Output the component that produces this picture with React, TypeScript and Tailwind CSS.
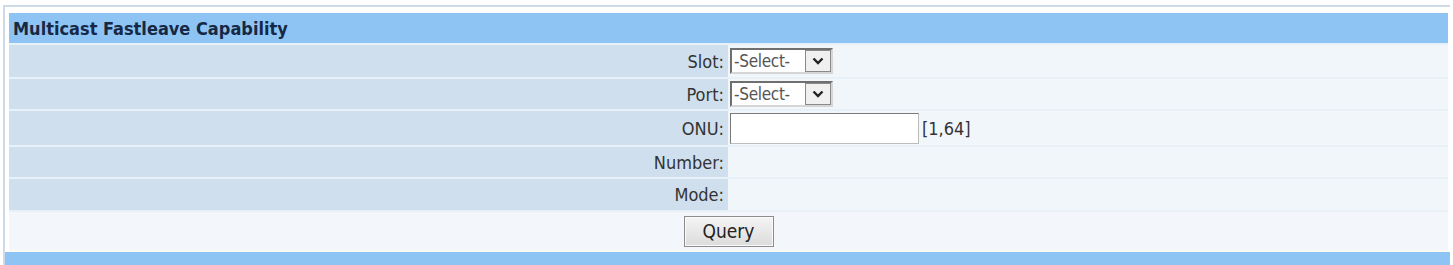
const font = { fontFamily: '"DejaVu Sans Condensed", "DejaVu Sans", sans-serif' };

function SelectBox() {
  return (
    <div className="flex h-[26px] w-[103px] border-2 border-t-[#6f6f6f] border-l-[#6f6f6f] border-r-[#d6d6d6] border-b-[#d6d6d6] bg-white">
      <span className="flex-1 pl-[2px] text-[17px] leading-[22px] tracking-[-0.3px] text-[#555]">-Select-</span>
      <span className="flex w-[26px] items-center justify-center border border-[#8a8a8a] bg-[#f0f0f0]">
        <svg width="12" height="8" viewBox="0 0 12 8">
          <path d="M1.5 1.5 L6 6 L10.5 1.5" fill="none" stroke="#222" strokeWidth="2.4" />
        </svg>
      </span>
    </div>
  );
}

function Row({ label, h, children }: { label: string; h: string; children?: React.ReactNode }) {
  return (
    <div className={`grid grid-cols-[719px_1fr] ${h}`}>
      <div className="flex items-center justify-end bg-[#cfdfee] pr-[4px] text-[18px] text-[#333]">{label}</div>
      <div className="flex items-center gap-[3px] bg-[#f1f6fb] pl-[2px] text-[18px] text-[#333]">{children}</div>
    </div>
  );
}

export default function App() {
  return (
    <div className="h-[265px] w-[1453px] overflow-hidden bg-white pl-[3px] pt-[5px]" style={font}>
      <div className="w-[1447px] border-l-2 border-t-2 border-[#cddbe8] bg-white pl-[4px] pt-[6px]">
        <div className="w-[1439px]">
          <div className="flex h-[30px] items-center bg-[#8ec4f4] pl-[4px] text-[18px] font-bold text-[#172844]">
            Multicast Fastleave Capability
          </div>
          <div className="flex flex-col gap-[2px] bg-[#e9f1f8] pt-[2px]">
            <Row label="Slot:" h="h-[32px]">
              <SelectBox />
            </Row>
            <Row label="Port:" h="h-[30px]">
              <SelectBox />
            </Row>
            <Row label="ONU:" h="h-[34px]">
              <input className="h-[31px] w-[189px] border border-t-[#7a7a7a] border-l-[#7a7a7a] border-r-[#bcbcbc] border-b-[#bcbcbc] bg-white outline-none" />
              <span>[1,64]</span>
            </Row>
            <Row label="Number:" h="h-[30px]" />
            <Row label="Mode:" h="h-[31px]" />
            <div className="flex h-[38px] items-center justify-center bg-[#f3f7fc]">
              <button className="h-[31px] w-[90px] border border-[#8c8c8c] bg-gradient-to-b from-[#f4f4f4] to-[#dcdcdc] text-[19px] text-[#222] shadow-[inset_0_0_0_1px_#fafafa]">
                Query
              </button>
            </div>
          </div>
          <div className="h-[2px] bg-[#fbfbf3]" />
          <div className="-ml-[4px] h-[20px] w-[1445px] bg-[#8ec4f4]" />
        </div>
      </div>
    </div>
  );
}
